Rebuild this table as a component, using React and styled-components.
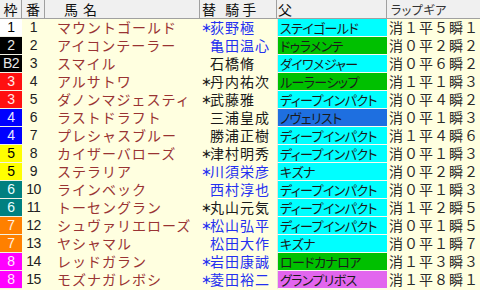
import React from "react";
import styled, { createGlobalStyle } from "styled-components";

const GlobalStyle = createGlobalStyle`
  html, body {
    margin: 0;
    padding: 0;
    background: #ffffe0;
  }
  body {
    font-family: "Noto Sans CJK JP", "Noto Sans", sans-serif;
  }
`;

const COLS = "22px 23px 155px 77px 110px 93px";

const FRAME_COLORS = {
  "1": { bg: "#ffffff", fg: "#000000" },
  "2": { bg: "#000000", fg: "#e8e8e8" },
  "3": { bg: "#ff1010", fg: "#ffe8e8" },
  "4": { bg: "#0000ff", fg: "#e8e8ff" },
  "5": { bg: "#ffff00", fg: "#000000" },
  "6": { bg: "#008080", fg: "#e8ffff" },
  "7": { bg: "#ff8000", fg: "#fff0e0" },
  "8": { bg: "#ff00ff", fg: "#ffe8ff" },
};

const SIRE_COLORS = {
  cyan: "#00ffff",
  green: "#00c000",
  blue: "#1e6fe0",
  violet: "#e266ee",
};

const horses = [
  { frame: "1", label: "1", no: 1, name: "マウントゴールド", mark: true, jockey: "荻野極", blue: true, sire: "ステイゴールド", sc: "cyan", lap: "消１平５瞬１" },
  { frame: "2", label: "2", no: 2, name: "アイコンテーラー", jockey: "亀田温心", blue: true, sire: "ドゥラメンテ", sc: "green", lap: "消０平２瞬２" },
  { frame: "2", label: "B2", no: 3, name: "スマイル", jockey: "石橋脩", sire: "ダイワメジャー", sc: "cyan", lap: "消０平６瞬２" },
  { frame: "3", label: "3", no: 4, name: "アルサトワ", mark: true, jockey: "丹内祐次", sire: "ルーラーシップ", sc: "green", lap: "消１平１瞬３" },
  { frame: "3", label: "3", no: 5, name: "ダノンマジェスティ", mark: true, jockey: "武藤雅", sire: "ディープインパクト", sc: "cyan", lap: "消０平４瞬２" },
  { frame: "4", label: "4", no: 6, name: "ラストドラフト", jockey: "三浦皇成", sire: "ノヴェリスト", sc: "blue", lap: "消０平１瞬３" },
  { frame: "4", label: "4", no: 7, name: "プレシャスブルー", jockey: "勝浦正樹", sire: "ディープインパクト", sc: "cyan", lap: "消１平４瞬６" },
  { frame: "5", label: "5", no: 8, name: "カイザーバローズ", mark: true, jockey: "津村明秀", sire: "ディープインパクト", sc: "cyan", lap: "消０平１瞬３" },
  { frame: "5", label: "5", no: 9, name: "ステラリア", mark: true, jockey: "川須栄彦", blue: true, sire: "キズナ", sc: "cyan", lap: "消０平２瞬２" },
  { frame: "6", label: "6", no: 10, name: "ラインベック", jockey: "西村淳也", blue: true, sire: "ディープインパクト", sc: "cyan", lap: "消０平１瞬３" },
  { frame: "6", label: "6", no: 11, name: "トーセングラン", mark: true, jockey: "丸山元気", sire: "ディープインパクト", sc: "cyan", lap: "消１平２瞬５" },
  { frame: "7", label: "7", no: 12, name: "シュヴァリエローズ", mark: true, jockey: "松山弘平", blue: true, sire: "ディープインパクト", sc: "cyan", lap: "消０平１瞬５" },
  { frame: "7", label: "7", no: 13, name: "ヤシャマル", jockey: "松田大作", blue: true, sire: "キズナ", sc: "cyan", lap: "消０平１瞬７" },
  { frame: "8", label: "8", no: 14, name: "レッドガラン", mark: true, jockey: "岩田康誠", blue: true, sire: "ロードカナロア", sc: "green", lap: "消１平３瞬３" },
  { frame: "8", label: "8", no: 15, name: "モズナガレボシ", mark: true, jockey: "菱田裕二", blue: true, sire: "グランプリボス", sc: "violet", lap: "消１平８瞬１" },
];

const Table = styled.div`
  width: 480px;
  background: #ffffe0;
`;

const HeaderRow = styled.div`
  display: grid;
  grid-template-columns: ${COLS};
  height: 18px;
  background: #f0f0f0;
  border-bottom: 1px solid #a0a0a0;
  color: #111;
  font-size: 14px;
  line-height: 18px;
`;

const HeadCell = styled.div`
  border-right: ${(p) => (p.$last ? "none" : "1px solid #a0a0a0")};
  text-align: ${(p) => (p.$center ? "center" : "left")};
  padding-left: ${(p) => p.$pad || 0}px;
  letter-spacing: ${(p) => p.$spacing || 0}px;
  white-space: pre;
  overflow: hidden;
`;

const SmallHead = styled.span`
  font-size: 12px;
  color: #333;
  font-feature-settings: "palt";
  letter-spacing: 0.5px;
`;

const Row = styled.div`
  display: grid;
  grid-template-columns: ${COLS};
  height: 18px;
  line-height: 17px;
`;

const FrameCell = styled.div`
  background: ${(p) => p.$bg};
  color: ${(p) => p.$fg};
  border-bottom: 1px solid #f2f2e4;
  text-align: center;
  font-family: "Liberation Sans", sans-serif;
  font-size: 14px;
  letter-spacing: -0.5px;
`;

const NumCell = styled.div`
  text-align: center;
  color: #222;
  font-size: 14px;
  font-family: "Liberation Sans", sans-serif;
  letter-spacing: -0.5px;
`;

const NameCell = styled.div`
  padding-left: 12px;
  color: #993333;
  font-size: 14px;
  letter-spacing: 1px;
  white-space: nowrap;
  overflow: hidden;
`;

const JockeyCell = styled.div`
  display: flex;
  padding-left: 1px;
  color: ${(p) => (p.$blue ? "#2430f0" : "#1a1a1a")};
  font-size: 14px;
  letter-spacing: 1px;
  white-space: nowrap;
  overflow: hidden;
`;

const Mark = styled.span`
  display: inline-block;
  width: 9px;
  font-family: "DejaVu Sans", sans-serif;
  font-size: 13px;
  letter-spacing: 0;
`;

const SireCell = styled.div`
  background: ${(p) => p.$bg};
  border-left: 1px solid #e4e4d4;
  border-bottom: 1px solid #fbfbf0;
  padding-left: 2px;
  color: #1a1a1a;
  font-size: 13px;
  font-feature-settings: "palt";
  letter-spacing: -0.6px;
  white-space: nowrap;
  overflow: hidden;
`;

const LapCell = styled.div`
  padding-left: 2px;
  color: #2a2a2a;
  font-size: 14px;
  letter-spacing: 1px;
  white-space: nowrap;
  overflow: hidden;
`;

export default function App() {
  return (
    <>
      <GlobalStyle />
      <Table>
        <HeaderRow>
          <HeadCell $center>枠</HeadCell>
          <HeadCell $center>番</HeadCell>
          <HeadCell $pad={19} $spacing={5}>馬名</HeadCell>
          <HeadCell $pad={2} $spacing={3}>替 騎手</HeadCell>
          <HeadCell $pad={1}>父</HeadCell>
          <HeadCell $pad={4} $last>
            <SmallHead>ラップギア</SmallHead>
          </HeadCell>
        </HeaderRow>
        {horses.map((h) => {
          const fc = FRAME_COLORS[h.frame];
          return (
            <Row key={h.no}>
              <FrameCell $bg={fc.bg} $fg={fc.fg}>{h.label}</FrameCell>
              <NumCell>{h.no}</NumCell>
              <NameCell>{h.name}</NameCell>
              <JockeyCell $blue={h.blue}>
                <Mark>{h.mark ? "∗" : ""}</Mark>
                {h.jockey}
              </JockeyCell>
              <SireCell $bg={SIRE_COLORS[h.sc]}>{h.sire}</SireCell>
              <LapCell>{h.lap}</LapCell>
            </Row>
          );
        })}
      </Table>
    </>
  );
}
